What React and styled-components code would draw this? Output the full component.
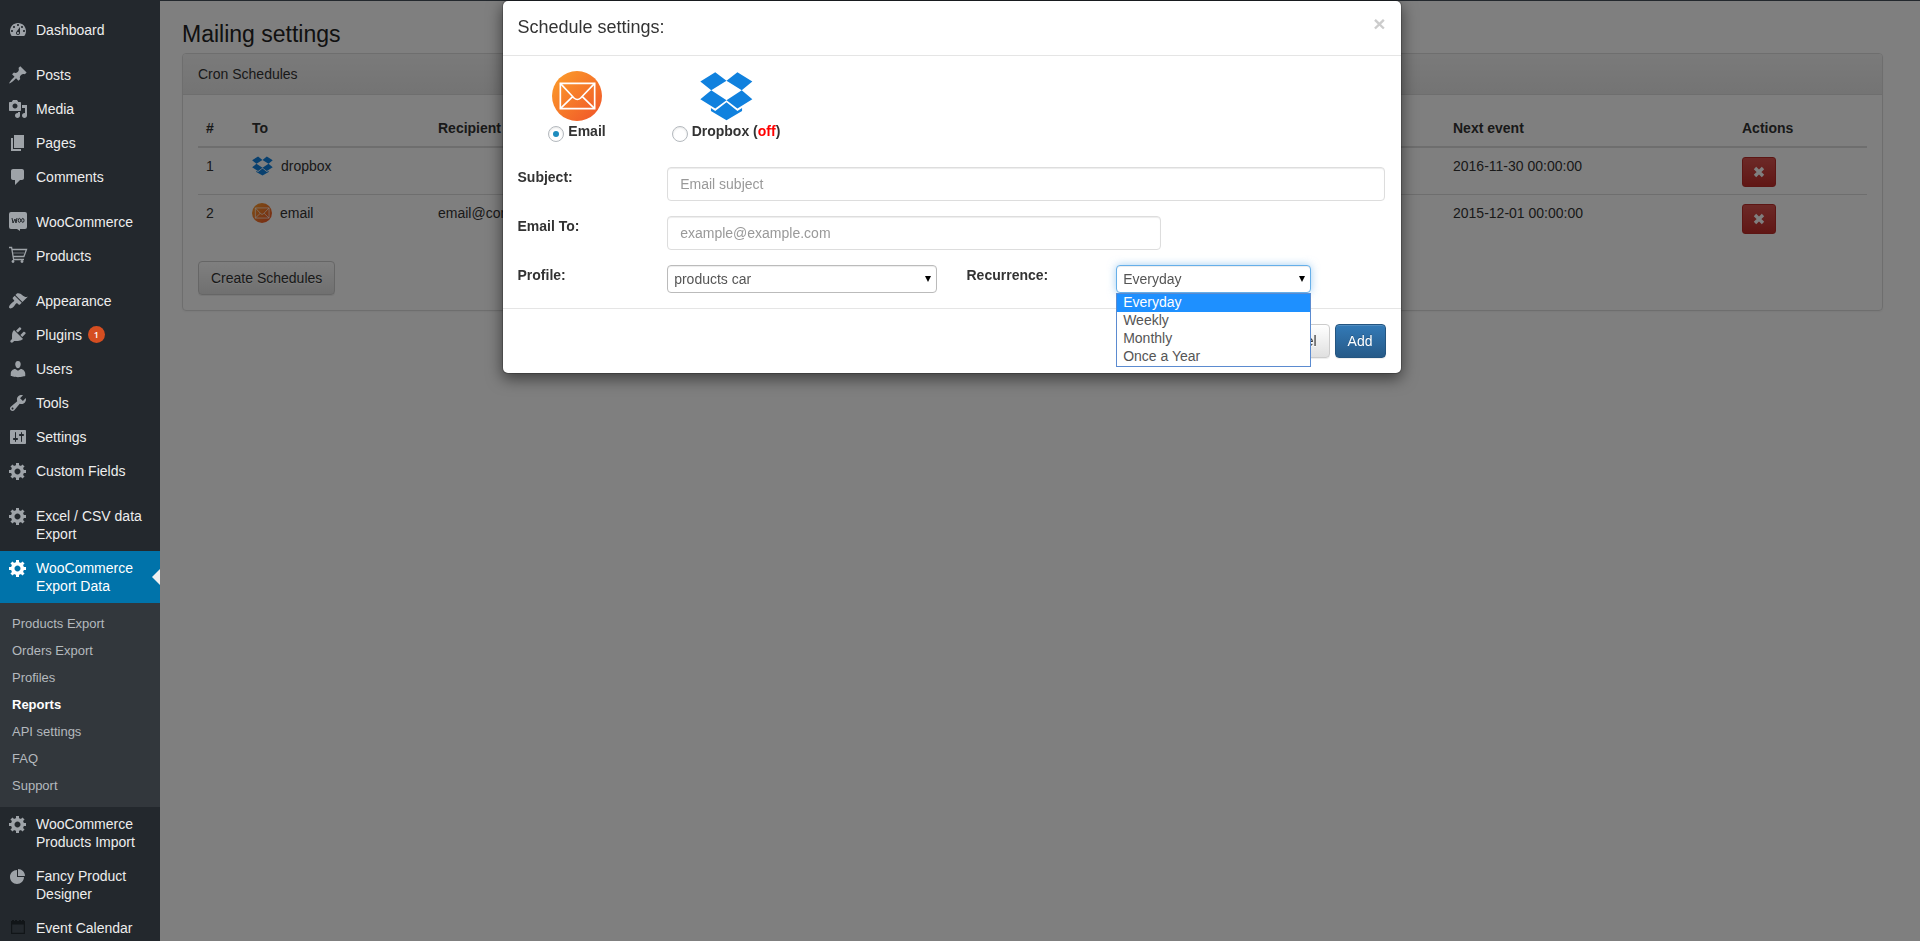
import React from "react";
import styled, { createGlobalStyle, css } from "styled-components";

const GlobalStyle = createGlobalStyle`
  *, *::before, *::after { box-sizing: border-box; }
  body {
    margin: 0;
    overflow: hidden;
    background: #fff;
    color: #333;
    font: 14px/20px "Liberation Sans", Arial, sans-serif;
  }
  button, input, select { font: inherit; }
`;

/* ---------- page frame ---------- */

const TopBar = styled.div`
  height: 1px;
  background: #23282d;
`;

const Layout = styled.div`
  display: flex;
  height: calc(100vh - 1px);
  overflow: hidden;
`;

const Sidebar = styled.nav`
  flex: 0 0 160px;
  position: relative;
  z-index: 3;
  padding-top: 12px;
  overflow: hidden;
  background: #23282d;
`;

const Main = styled.main`
  flex: 1;
  min-width: 0;
  padding: 19px 37px 0 22px;
`;

/* ---------- sidebar ---------- */

const MenuList = styled.ul`
  margin: 0;
  padding: 0;
  list-style: none;
`;

const MenuEntry = styled.li`
  margin-top: ${(p) => (p.$spaced ? "11px" : "0")};
`;

const MenuLink = styled.a`
  position: relative;
  display: flex;
  gap: 8px;
  padding: 8px 12px 8px 8px;
  color: ${(p) => (p.$active ? "#fff" : "#eee")};
  background: ${(p) => (p.$active ? "#0073aa" : "transparent")};
  line-height: 18px;
  text-decoration: none;

  svg {
    flex: none;
    margin: -1px 0;
    fill: ${(p) => (p.$active ? "#fff" : "#9ea3a8")};
  }

  ${(p) =>
    p.$active &&
    css`
      &::after {
        content: "";
        position: absolute;
        right: 0;
        top: 18px;
        border: 8px solid transparent;
        border-left-width: 0;
        border-right-color: #f1f1f1;
      }
    `}
`;

const CountBadge = styled.span`
  display: inline-block;
  min-width: 17px;
  margin-left: 6px;
  border-radius: 9px;
  background: #d54e21;
  color: #fff;
  font: 600 9px/17px "Open Sans", sans-serif;
  text-align: center;
  vertical-align: top;
`;

const Submenu = styled.ul`
  margin: 0;
  padding: 7px 0 8px;
  list-style: none;
  background: #32373c;
`;

const SubmenuLink = styled.a`
  display: block;
  padding: 5px 12px;
  color: ${(p) => (p.$current ? "#fff" : "#b4b9be")};
  font-size: 13px;
  font-weight: ${(p) => (p.$current ? "bold" : "normal")};
  line-height: 17px;
  text-decoration: none;
`;

/* ---------- panel and table ---------- */

const PageTitle = styled.h1`
  margin: 0;
  padding-bottom: 4px;
  color: #222;
  font-size: 23px;
  font-weight: normal;
  line-height: 29px;
`;

const Panel = styled.section`
  border: 1px solid #ddd;
  border-radius: 4px;
  box-shadow: 0 1px 2px rgba(0, 0, 0, 0.05);
`;

const PanelHeading = styled.h2`
  margin: 0;
  padding: 10px 15px;
  border-bottom: 1px solid #ddd;
  border-radius: 3px 3px 0 0;
  background: linear-gradient(#f5f5f5, #e8e8e8);
  font-size: 14px;
  font-weight: normal;
`;

const PanelBody = styled.div`
  padding: 15px;
`;

const Table = styled.table`
  width: 100%;
  margin-bottom: 20px;
  border-spacing: 0;
  table-layout: fixed;
`;

const HeadCell = styled.th`
  width: ${(p) => p.$width || "auto"};
  padding: 8px;
  border-bottom: 2px solid #ddd;
  text-align: left;
`;

const Cell = styled.td`
  height: 46px;
  padding: 8px 8px 7px;
  vertical-align: top;

  tr + tr > & {
    height: 47px;
    border-top: 1px solid #ddd;
  }
`;

const Target = styled.span`
  display: flex;
  align-items: center;
  gap: 8px;
`;

const Button = styled.button`
  height: 34px;
  padding: 0 12px;
  border: 1px solid #ccc;
  border-radius: 4px;
  background: linear-gradient(#fff, #e0e0e0);
  box-shadow: inset 0 1px 0 rgba(255, 255, 255, 0.15), 0 1px 1px rgba(0, 0, 0, 0.075);
  color: #333;
  text-shadow: 0 1px 0 #fff;

  ${(p) =>
    p.$primary &&
    css`
      border-color: #245580;
      background: linear-gradient(#337ab7, #265a88);
      color: #fff;
      text-shadow: 0 -1px 0 rgba(0, 0, 0, 0.2);
    `}
`;

const DeleteButton = styled.button`
  display: flex;
  align-items: center;
  justify-content: center;
  width: 34px;
  height: 30px;
  margin-top: 1px;
  padding: 0;
  border: 1px solid #b92c28;
  border-radius: 3px;
  background: linear-gradient(#d9534f, #c12e2a);
`;

/* ---------- modal ---------- */

const Backdrop = styled.div`
  position: fixed;
  inset: 1px 0 0;
  z-index: 1;
  background: rgba(0, 0, 0, 0.5);
`;

const ModalLayer = styled.div`
  position: fixed;
  inset: 0;
  z-index: 4;
  padding-right: 17px;
  pointer-events: none;
`;

const Dialog = styled.div`
  width: 100%;
  max-width: 900px;
  margin: 0 auto;
  border: 1px solid rgba(0, 0, 0, 0.2);
  border-radius: 6px;
  background: #fff;
  background-clip: padding-box;
  box-shadow: 0 5px 15px rgba(0, 0, 0, 0.5);
  pointer-events: auto;
`;

const DialogHeader = styled.header`
  display: flex;
  justify-content: space-between;
  padding: 14px 15px 16px;
  border-bottom: 1px solid #e5e5e5;
`;

const DialogTitle = styled.h2`
  margin: 0;
  font-size: 18px;
  font-weight: normal;
  line-height: 24px;
`;

const CloseButton = styled.button`
  height: 18px;
  padding: 0;
  border: 0;
  background: none;
  color: #ccc;
  font-size: 21px;
  font-weight: bold;
  line-height: 18px;
`;

const DialogBody = styled.div`
  padding: 15px;
`;

const DialogFooter = styled.footer`
  display: flex;
  justify-content: flex-end;
  gap: 5px;
  padding: 15px;
  border-top: 1px solid #e5e5e5;
`;

const Choices = styled.div`
  display: flex;
  margin: 0 -15px 25px;
`;

const Choice = styled.label`
  display: flex;
  flex-direction: column;
  align-items: center;
  width: 149px;
  font-weight: bold;
`;

const ChoiceCaption = styled.span`
  display: flex;
  gap: 4px;
`;

const Radio = styled.input`
  appearance: none;
  display: grid;
  place-items: center;
  width: 16px;
  height: 16px;
  margin: 5px 0 0;
  border: 1px solid #b4b9be;
  border-radius: 50%;
  background: #fff;
  box-shadow: inset 0 1px 2px rgba(0, 0, 0, 0.1);

  &:checked::before {
    content: "";
    width: 6px;
    height: 6px;
    border-radius: 50%;
    background: #1e8cbe;
  }
`;

const Off = styled.span`
  color: #f00;
`;

const FieldGrid = styled.div`
  display: grid;
  grid-template-columns: repeat(12, 1fr);
  gap: 15px 30px;
`;

const FieldLabel = styled.label`
  grid-column: span 2;
  font-weight: bold;
`;

const TextInput = styled.input`
  grid-column: span ${(p) => p.$span};
  min-width: 0;
  height: 34px;
  padding: 6px 12px;
  border: 1px solid #ddd;
  border-radius: 4px;
  box-shadow: inset 0 1px 1px rgba(0, 0, 0, 0.075);
  color: #555;

  &::placeholder {
    color: #999;
    opacity: 1;
  }
`;

const LineRest = styled.span`
  grid-column: span ${(p) => p.$span};
`;

const SelectBox = styled.div`
  position: relative;
  grid-column: span ${(p) => p.$span};

  &::after {
    content: "";
    position: absolute;
    top: 11px;
    right: 6px;
    border: 3px solid transparent;
    border-top: 6px solid #000;
    border-bottom-width: 0;
    pointer-events: none;
  }
`;

const Select = styled.select`
  appearance: none;
  display: block;
  width: 100%;
  height: 28px;
  padding: 0 6px;
  border: 1px solid ${(p) => (p.$open ? "#66afe9" : "#bbb")};
  border-radius: 4px;
  background: #fff;
  box-shadow: inset 0 1px 1px rgba(0, 0, 0, 0.075)
    ${(p) => (p.$open ? ", 0 0 8px rgba(102, 175, 233, 0.6)" : "")};
  color: #555;
`;

const OptionList = styled.ul`
  position: absolute;
  top: 100%;
  left: 0;
  right: 0;
  z-index: 1;
  margin: 0;
  padding: 0;
  border: 1px solid #5b8bd0;
  background: #fff;
  color: #555;
  line-height: 16px;
  list-style: none;
`;

const Option = styled.li`
  padding: 0 6px 2px;
  background: ${(p) => (p.$selected ? "#1e90ff" : "transparent")};
  color: ${(p) => (p.$selected ? "#fff" : "inherit")};
`;

/* ---------- drawings ---------- */

const ICONS = {
  dashboard:
    "M3.76 16h12.48c1.1-1.37 1.76-3.11 1.76-5 0-4.42-3.58-8-8-8s-8 3.58-8 8c0 1.89.66 3.63 1.76 5zM10 4c.55 0 1 .45 1 1s-.45 1-1 1-1-.45-1-1 .45-1 1-1zM6 6c.55 0 1 .45 1 1s-.45 1-1 1-1-.45-1-1 .45-1 1-1zm8 0c.55 0 1 .45 1 1s-.45 1-1 1-1-.45-1-1 .45-1 1-1zm-5.37 5.55L12 7v6c0 1.1-.9 2-2 2s-2-.9-2-2c0-.57.24-1.08.63-1.45zM4 10c.55 0 1 .45 1 1s-.45 1-1 1-1-.45-1-1 .45-1 1-1zm12 0c.55 0 1 .45 1 1s-.45 1-1 1-1-.45-1-1 .45-1 1-1zm-5 3c0-.55-.45-1-1-1s-1 .45-1 1 .45 1 1 1 1-.45 1-1z",
  pin: "M10.44 3.02l1.82-1.82 6.36 6.35-1.83 1.82c-1.05-.68-2.48-.57-3.41.36l-.75.75c-.92.93-1.04 2.35-.35 3.41l-1.83 1.82-2.41-2.41-2.8 2.79c-.42.42-3.38 2.71-3.8 2.29s1.86-3.39 2.28-3.81l2.79-2.79L4.1 9.36l1.83-1.82c1.05.69 2.48.57 3.4-.36l.75-.75c.93-.92 1.05-2.35.36-3.41z",
  media:
    "M13 11V4c0-.55-.45-1-1-1h-1.67L9 1H5L3.67 3H2c-.55 0-1 .45-1 1v7c0 .55.45 1 1 1h10c.55 0 1-.45 1-1zM7 4.5c1.38 0 2.5 1.12 2.5 2.5S8.38 9.5 7 9.5 4.5 8.38 4.5 7 5.62 4.5 7 4.5zM14 6h5v10.5c0 1.38-1.12 2.5-2.5 2.5S14 17.88 14 16.5s1.12-2.5 2.5-2.5c.17 0 .34.02.5.05V9h-3V6zm-4 8.05V13h2v3.5c0 1.38-1.12 2.5-2.5 2.5S7 17.88 7 16.5 8.12 14 9.5 14c.17 0 .34.02.5.05z",
  pages: "M6 15V2h10v13H6zm-1 1h8v2H3V5h2v11z",
  comment:
    "M5 2h9c1.1 0 2 .9 2 2v7c0 1.1-.9 2-2 2h-2l-5 5v-5H5c-1.1 0-2-.9-2-2V4c0-1.1.9-2 2-2z",
  brush:
    "M14.48 11.06L7.41 3.99l1.5-1.5c.5-.56 2.3-.47 3.51.32 1.21.8 1.43 1.28 2.91 2.1 1.18.64 2.45 1.26 4.45.85zm-.71.71L6.7 4.7 4.93 6.47c-.39.39-.39 1.02 0 1.41l1.06 1.06c.39.39.39 1.03 0 1.42-.6.6-1.43 1.11-2.21 1.69-.35.26-.7.53-1.01.84C1.43 14.23.4 16.08 1.4 17.07c.99 1 2.84-.03 4.18-1.36.31-.31.58-.66.85-1.02.57-.78 1.08-1.61 1.69-2.21.39-.39 1.02-.39 1.41 0l1.06 1.06c.39.39 1.02.39 1.41 0z",
  plug: "M13.11 4.36L9.87 7.6 8 5.73l3.24-3.24c.35-.34 1.05-.2 1.56.32.52.51.66 1.21.31 1.55zm-8 1.77l.91-1.12 9.01 9.01-1.19.84c-.71.71-2.63 1.16-3.82 1.16H6.14L4.9 17.26c-.59.59-1.54.59-2.12 0-.59-.58-.59-1.53 0-2.12l1.24-1.24v-3.88c0-1.13.4-3.19 1.09-3.89zm7.26 3.97l3.24-3.24c.34-.35 1.04-.21 1.55.31.52.51.66 1.21.31 1.55l-3.24 3.25z",
  user: "M10 9.25c-2.27 0-2.73-3.44-2.73-3.44C7 4.02 7.82 2 9.97 2c2.16 0 2.98 2.02 2.71 3.81 0 0-.41 3.44-2.68 3.44zm0 2.57L12.72 10c2.39 0 4.52 2.33 4.52 4.53v2.49s-3.65 1.13-7.24 1.13c-3.65 0-7.24-1.13-7.24-1.13v-2.49c0-2.25 1.94-4.48 4.47-4.48z",
  wrench:
    "M16.68 9.77c-1.34 1.34-3.3 1.67-4.95.99l-5.41 6.52c-.99.99-2.59.99-3.58 0s-.99-2.59 0-3.57l6.52-5.42c-.68-1.65-.35-3.61.99-4.95 1.28-1.28 3.12-1.62 4.72-1.06l-2.89 2.89 2.82 2.82 2.86-2.87c.53 1.58.18 3.39-1.08 4.65zM3.81 16.21c.4.39 1.04.39 1.43 0 .4-.4.4-1.04 0-1.43-.39-.4-1.03-.4-1.43 0-.39.39-.39 1.03 0 1.43z",
  sliders:
    "M18 16V4c0-.55-.45-1-1-1H3c-.55 0-1 .45-1 1v12c0 .55.45 1 1 1h14c.55 0 1-.45 1-1zM8 11h1c.55 0 1 .45 1 1s-.45 1-1 1H8v1.5c0 .28-.22.5-.5.5s-.5-.22-.5-.5V13H6c-.55 0-1-.45-1-1s.45-1 1-1h1V5.5c0-.28.22-.5.5-.5s.5.22.5.5V11zm5-2h-1c-.55 0-1-.45-1-1s.45-1 1-1h1V5.5c0-.28.22-.5.5-.5s.5.22.5.5V7h1c.55 0 1 .45 1 1s-.45 1-1 1h-1v5.5c0 .28-.22.5-.5.5s-.5-.22-.5-.5V9z",
  gear: "M18 12h-2.18c-.17.7-.44 1.35-.81 1.93l1.54 1.54-2.1 2.1-1.54-1.54c-.58.36-1.23.63-1.91.79V19H8v-2.18c-.68-.16-1.33-.43-1.91-.79l-1.54 1.54-2.12-2.12 1.54-1.54c-.36-.58-.63-1.23-.79-1.91H1V9.03h2.17c.16-.7.44-1.35.8-1.94L2.43 5.55l2.1-2.1 1.54 1.54c.58-.37 1.24-.64 1.93-.81V2h3v2.18c.68.16 1.33.43 1.91.79l1.54-1.54 2.12 2.12-1.54 1.54c.36.59.64 1.24.8 1.94H18V12zm-8.500 1.500c1.660 0 3-1.340 3-3s-1.340-3-3-3-3 1.340-3 3 1.340 3 3 3z",
  pie: "M10 10V3c3.87 0 7 3.13 7 7h-7zM9 4v7h7c0 3.87-3.13 7-7 7s-7-3.13-7-7 3.13-7 7-7z",
};

function MenuIcon({ name }) {
  if (name === "woo") {
    return (
      <svg width="20" height="20" viewBox="0 0 20 20" aria-hidden="true">
        <path d="M3 0h14a2 2 0 0 1 2 2v13a2 2 0 0 1-2 2h-5v2l-3-2H3a2 2 0 0 1-2-2V2a2 2 0 0 1 2-2z" />
        <g fill="none" stroke="#23282d" strokeWidth="1">
          <path d="M4 6l1 5 2-4 1 4 1-5" />
          <ellipse cx="11.4" cy="8.4" rx="1.2" ry="2" />
          <ellipse cx="14.8" cy="8.4" rx="1.2" ry="2" />
        </g>
      </svg>
    );
  }
  if (name === "cart") {
    return (
      <svg width="20" height="20" viewBox="0 0 20 20" aria-hidden="true">
        <g style={{ fill: "none" }} stroke="#9ea3a8" strokeWidth="1.3">
          <path d="M1 1.5h2.600l2 12H16M4 3.500h14.500l-2.600 7H5.200" />
          <path d="M5 7h11" strokeWidth="0.6" />
        </g>
        <circle cx="5" cy="15.500" r="1.400" />
        <circle cx="14" cy="15.500" r="1.400" />
      </svg>
    );
  }
  if (name === "calendar") {
    return (
      <svg width="20" height="20" viewBox="0 0 20 20" aria-hidden="true">
        <path
          style={{ fill: "#111518" }}
          d="M3 3h1V2h2v1h1V2h2v1h2V2h2v1h1V2h2v1h1v13H3V3zm1.200 3.500v8.300h11.600V6.500z"
          fillRule="evenodd"
        />
      </svg>
    );
  }
  return (
    <svg width="20" height="20" viewBox="0 0 20 20" aria-hidden="true">
      <path d={ICONS[name]} />
    </svg>
  );
}

function EmailLogo({ size, id }) {
  return (
    <svg width={size} height={size} viewBox="0 0 150 150" aria-hidden="true">
      <defs>
        <linearGradient id={id} x1="0.1" y1="0.1" x2="0.9" y2="0.9">
          <stop offset="0" stopColor="#fb982a" />
          <stop offset="1" stopColor="#f15a29" />
        </linearGradient>
      </defs>
      <circle cx="75" cy="75" r="75" fill={`url(#${id})`} />
      <g fill="none" stroke="#fff" strokeWidth="5">
        <path d="M25 37h103v76H25z" />
        <path d="M25 37l41 44q10 9 20 0l42-44M25 113l37-36M128 113L91 77" />
      </g>
    </svg>
  );
}

function DropboxLogo({ width, height }) {
  return (
    <svg width={width} height={height} viewBox="0 0 160 150" fill="#1081de" aria-hidden="true">
      <path d="M1 31L46 3l34 26-46 29zM80 29l33-26 45 28-32 27zM34 58l46 30-34 25L1 85zM126 58l32 27-45 28-33-25z" />
      <path d="M80 94l33 26 14-9v9l-47 28-47-28v-9l13 9z" />
    </svg>
  );
}

function CrossIcon() {
  return (
    <svg width="12" height="12" viewBox="0 0 12 12" aria-hidden="true">
      <path d="M2 2l8 8M10 2l-8 8" stroke="#fff" strokeWidth="3.400" />
    </svg>
  );
}

/* ---------- content ---------- */

const MENU = [
  { label: "Dashboard", icon: "dashboard" },
  { label: "Posts", icon: "pin", spaced: true },
  { label: "Media", icon: "media" },
  { label: "Pages", icon: "pages" },
  { label: "Comments", icon: "comment" },
  { label: "WooCommerce", icon: "woo", spaced: true },
  { label: "Products", icon: "cart" },
  { label: "Appearance", icon: "brush", spaced: true },
  { label: "Plugins", icon: "plug", count: 1 },
  { label: "Users", icon: "user" },
  { label: "Tools", icon: "wrench" },
  { label: "Settings", icon: "sliders" },
  { label: "Custom Fields", icon: "gear" },
  { label: "Excel / CSV data Export", icon: "gear", spaced: true },
  {
    label: "WooCommerce Export Data",
    icon: "gear",
    active: true,
    children: [
      "Products Export",
      "Orders Export",
      "Profiles",
      "Reports",
      "API settings",
      "FAQ",
      "Support",
    ],
  },
  { label: "WooCommerce Products Import", icon: "gear" },
  { label: "Fancy Product Designer", icon: "pie" },
  { label: "Event Calendar", icon: "calendar" },
];

const SCHEDULES = [
  { id: 1, to: "dropbox", recipient: "", next: "2016-11-30 00:00:00" },
  { id: 2, to: "email", recipient: "email@com.com", next: "2015-12-01 00:00:00" },
];

const RECURRENCES = ["Everyday", "Weekly", "Monthly", "Once a Year"];

function AdminMenu() {
  return (
    <Sidebar aria-label="Main menu">
      <MenuList>
        {MENU.map((item) => (
          <MenuEntry key={item.label} $spaced={item.spaced}>
            <MenuLink href="#" $active={item.active}>
              <MenuIcon name={item.icon} />
              <span>
                {item.label}
                {item.count && <CountBadge>{item.count}</CountBadge>}
              </span>
            </MenuLink>
            {item.children && (
              <Submenu>
                {item.children.map((name) => (
                  <li key={name}>
                    <SubmenuLink href="#" $current={name === "Reports"}>
                      {name}
                    </SubmenuLink>
                  </li>
                ))}
              </Submenu>
            )}
          </MenuEntry>
        ))}
      </MenuList>
    </Sidebar>
  );
}

function ScheduleTable() {
  return (
    <Table>
      <thead>
        <tr>
          <HeadCell $width="46px">#</HeadCell>
          <HeadCell $width="186px">To</HeadCell>
          <HeadCell>Recipient</HeadCell>
          <HeadCell $width="289px">Next event</HeadCell>
          <HeadCell $width="133px">Actions</HeadCell>
        </tr>
      </thead>
      <tbody>
        {SCHEDULES.map((row) => (
          <tr key={row.id}>
            <Cell>{row.id}</Cell>
            <Cell>
              <Target>
                {row.to === "dropbox" ? (
                  <DropboxLogo width={21} height={20} />
                ) : (
                  <EmailLogo size={20} id="mail-small" />
                )}
                {row.to}
              </Target>
            </Cell>
            <Cell>{row.recipient}</Cell>
            <Cell>{row.next}</Cell>
            <Cell>
              <DeleteButton type="button" aria-label="Delete schedule">
                <CrossIcon />
              </DeleteButton>
            </Cell>
          </tr>
        ))}
      </tbody>
    </Table>
  );
}

function ScheduleDialog() {
  return (
    <ModalLayer>
      <Dialog role="dialog" aria-labelledby="dialog-title">
        <DialogHeader>
          <DialogTitle id="dialog-title">Schedule settings:</DialogTitle>
          <CloseButton type="button" aria-label="Close">
            ×
          </CloseButton>
        </DialogHeader>
        <DialogBody>
          <Choices>
            <Choice>
              <EmailLogo size={50} id="mail-large" />
              <ChoiceCaption>
                <Radio type="radio" name="target" defaultChecked />
                <span>Email</span>
              </ChoiceCaption>
            </Choice>
            <Choice>
              <DropboxLogo width={53} height={50} />
              <ChoiceCaption>
                <Radio type="radio" name="target" />
                <span>
                  Dropbox (<Off>off</Off>)
                </span>
              </ChoiceCaption>
            </Choice>
          </Choices>
          <FieldGrid>
            <FieldLabel htmlFor="subject">Subject:</FieldLabel>
            <TextInput id="subject" $span={10} placeholder="Email subject" />

            <FieldLabel htmlFor="email-to">Email To:</FieldLabel>
            <TextInput id="email-to" $span={7} placeholder="example@example.com" />
            <LineRest $span={3} />

            <FieldLabel htmlFor="profile">Profile:</FieldLabel>
            <SelectBox $span={4}>
              <Select id="profile">
                <option>products car</option>
              </Select>
            </SelectBox>
            <FieldLabel htmlFor="recurrence">Recurrence:</FieldLabel>
            <SelectBox $span={3}>
              <Select id="recurrence" $open>
                {RECURRENCES.map((name) => (
                  <option key={name}>{name}</option>
                ))}
              </Select>
              <OptionList role="listbox" aria-label="Recurrence">
                {RECURRENCES.map((name, i) => (
                  <Option key={name} role="option" aria-selected={i === 0} $selected={i === 0}>
                    {name}
                  </Option>
                ))}
              </OptionList>
            </SelectBox>
          </FieldGrid>
        </DialogBody>
        <DialogFooter>
          <Button type="button">Cancel</Button>
          <Button type="button" $primary>
            Add
          </Button>
        </DialogFooter>
      </Dialog>
    </ModalLayer>
  );
}

export default function App() {
  return (
    <>
      <GlobalStyle />
      <TopBar />
      <Layout>
        <AdminMenu />
        <Main>
          <PageTitle>Mailing settings</PageTitle>
          <Panel>
            <PanelHeading>Cron Schedules</PanelHeading>
            <PanelBody>
              <ScheduleTable />
              <Button type="button">Create Schedules</Button>
            </PanelBody>
          </Panel>
        </Main>
      </Layout>
      <Backdrop />
      <ScheduleDialog />
    </>
  );
}
